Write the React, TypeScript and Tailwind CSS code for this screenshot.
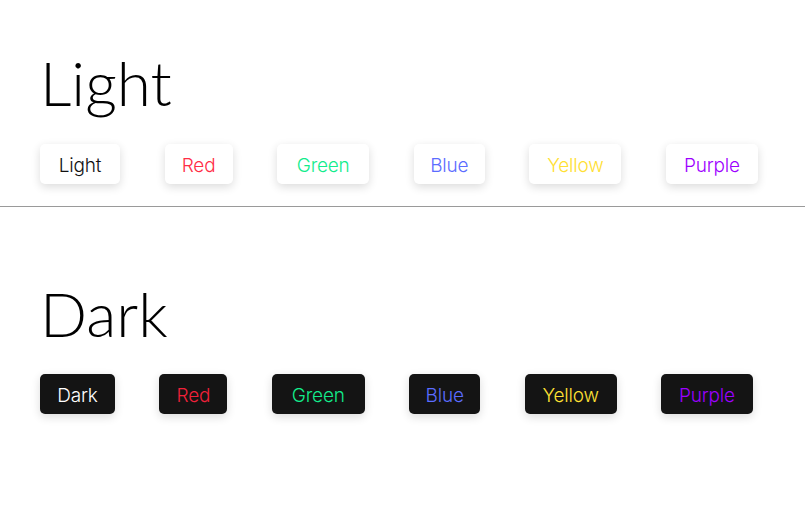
const LIGHT = [
  { label: 'Light', color: 'text-[#111111]', w: 'w-[80px]' },
  { label: 'Red', color: 'text-[#ff2d46]', w: 'w-[68px]' },
  { label: 'Green', color: 'text-[#12ec8c]', w: 'w-[92px]' },
  { label: 'Blue', color: 'text-[#5b6cff]', w: 'w-[71px]' },
  { label: 'Yellow', color: 'text-[#ffe033]', w: 'w-[92px]' },
  { label: 'Purple', color: 'text-[#9d00ff]', w: 'w-[92px]' },
]

const DARK = [
  { label: 'Dark', color: 'text-white', w: 'w-[75px]' },
  { label: 'Red', color: 'text-[#f0213a]', w: 'w-[68px]' },
  { label: 'Green', color: 'text-[#12ec8c]', w: 'w-[93px]' },
  { label: 'Blue', color: 'text-[#5b6cff]', w: 'w-[71px]' },
  { label: 'Yellow', color: 'text-[#ffe033]', w: 'w-[92px]' },
  { label: 'Purple', color: 'text-[#9d00ff]', w: 'w-[92px]' },
]

function Chip({ label, color, w, dark }: { label: string; color: string; w: string; dark?: boolean }) {
  return (
    <button
      className={`${w} h-10 shrink-0 rounded-[5px] pt-1 flex items-center justify-center font-['Inter',sans-serif] text-[19px] font-[320] tracking-[-0.2px] shadow-[0_3px_10px_rgba(0,0,0,0.14)] ${color} ${dark ? 'bg-[#141414]' : 'bg-white'}`}
    >
      {label}
    </button>
  )
}

export default function App() {
  return (
    <div className="w-[805px] h-[506px] bg-white overflow-hidden" style={{ fontFamily: 'Lato, "Open Sans", sans-serif' }}>
      <section className="px-10 pt-[46px] pb-[22px]">
        <h1 className="text-[62px] leading-[72px] font-light text-black">Light</h1>
        <div className="flex gap-[44.6px] mt-[26px]">
          {LIGHT.map((c) => <Chip key={c.label} {...c} />)}
        </div>
      </section>
      <div className="h-px bg-[#9a9a9a]" />
      <section className="px-10 pt-[70px]">
        <h1 className="text-[62px] leading-[72px] font-light text-black">Dark</h1>
        <div className="flex gap-[44.4px] mt-[25px]">
          {DARK.map((c) => <Chip key={c.label} {...c} dark />)}
        </div>
      </section>
    </div>
  )
}
